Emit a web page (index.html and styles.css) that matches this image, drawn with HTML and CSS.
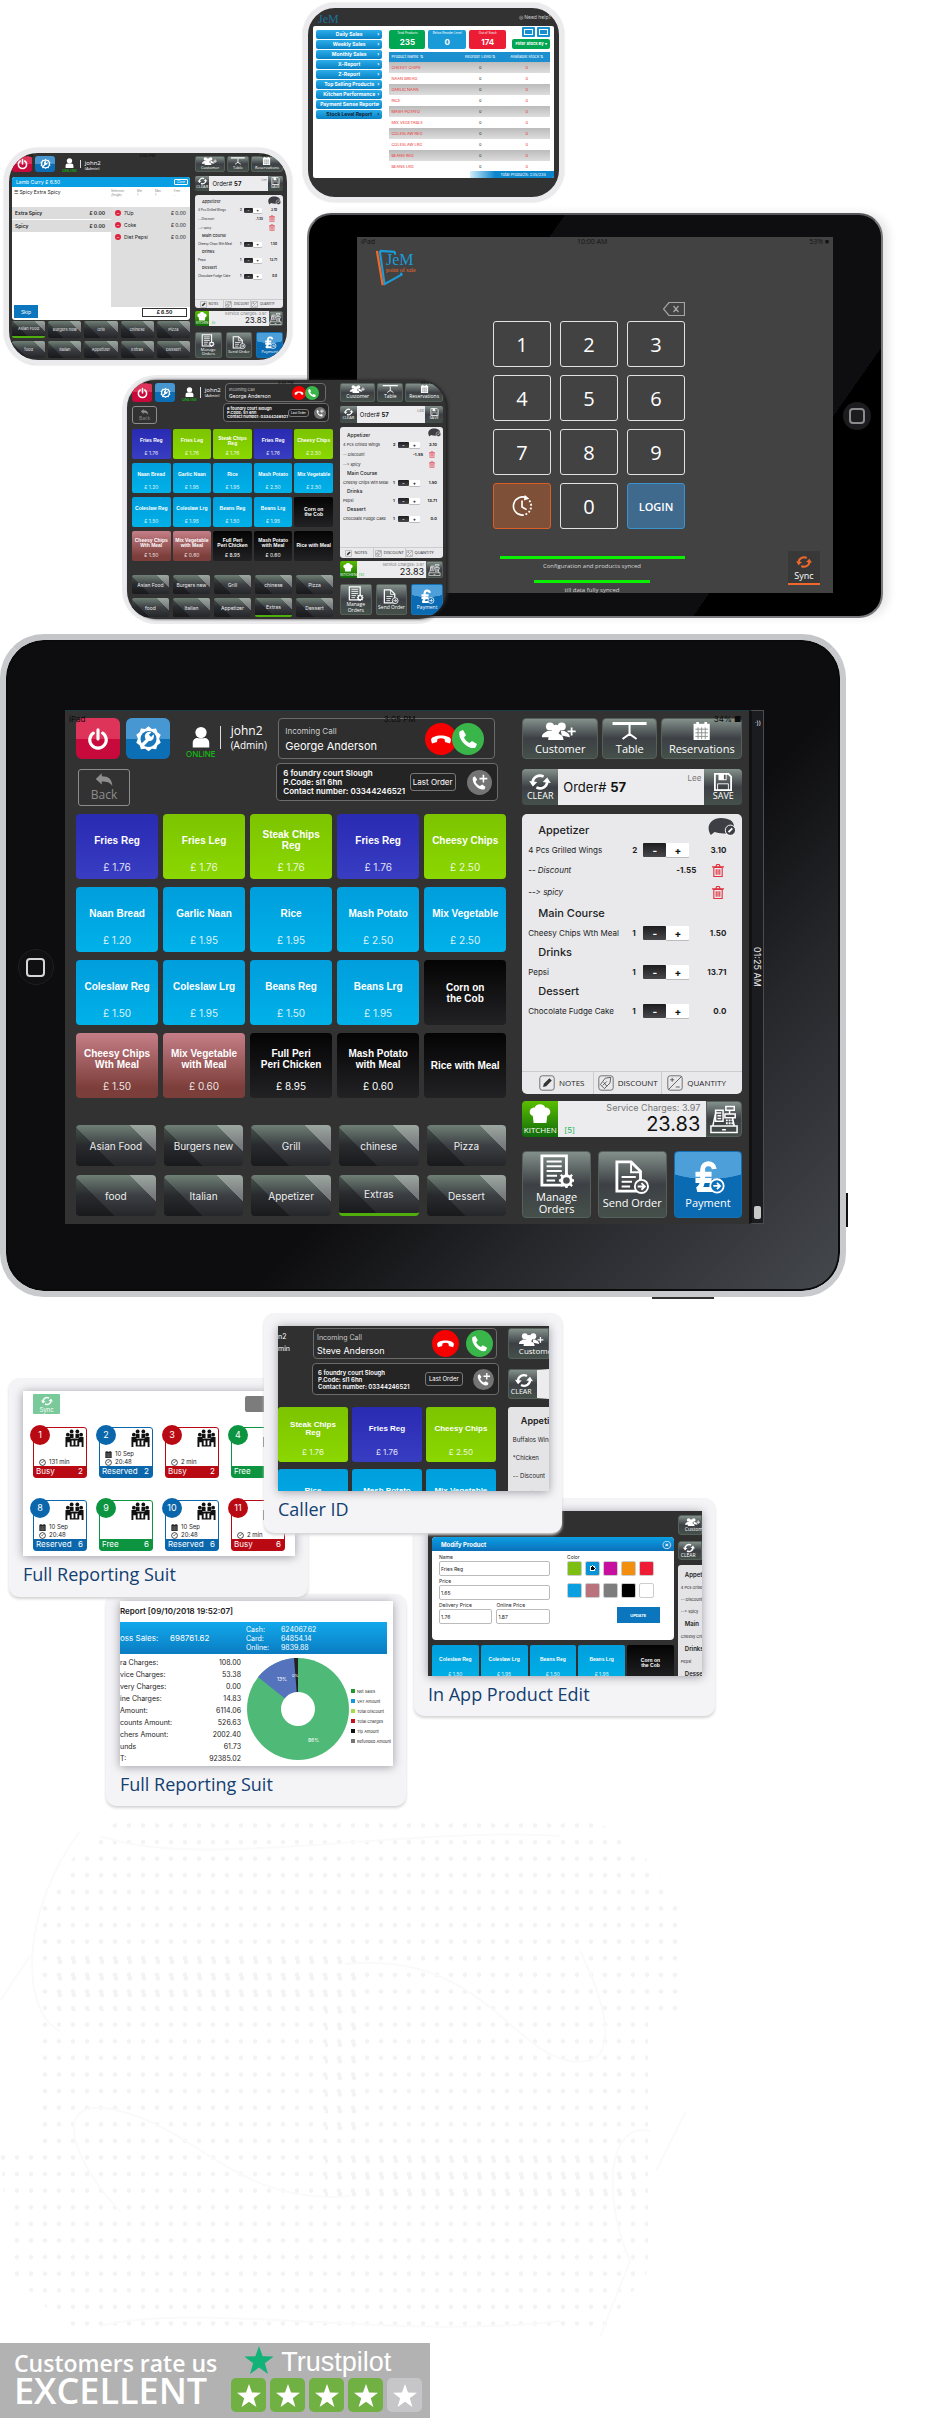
FILE: index.html
```html
<!DOCTYPE html>
<html lang="en">
<head>
<meta charset="utf-8">
<meta name="viewport" content="width=device-width, initial-scale=1">
<title>JeM Point of Sale</title>
<link rel="stylesheet" href="styles.css">
</head>
<body>
<svg class="sprite" aria-hidden="true">
  <symbol id="power" viewBox="0 0 24 24"><path d="M7 5.5a9 9 0 1 0 10 0M12 2v10" fill="none" stroke="currentColor" stroke-width="3.4" stroke-linecap="round"/></symbol>
  <symbol id="gear" viewBox="0 0 32 32"><path d="M16 1l4 3 5-.5 1.500 4.500 4 3-2 4.500 2 5-4 3-1.500 4.500-5-.5-4 3-4-3-5 .5L5.500 23.500l-4-3 2-5-2-4.500 4-3L7 3.500l5 .5z" fill="#fff"/><circle cx="16" cy="16" r="9.500" fill="#1878bb"/><path d="M10 22l7-7" stroke="#fff" stroke-width="4" stroke-linecap="round"/><path d="M22 10.500l-3 3-2.500-2.500L19.500 8a5.500 5.500 0 1 0 2.500 2.500z" fill="#fff"/></symbol>
  <symbol id="user" viewBox="0 0 24 28"><circle cx="12" cy="8" r="7.500" fill="currentColor"/><path d="M1 28v-6c0-5 4-7 7-6.500h8c3-.5 7 1.500 7 6.500v6z" fill="currentColor"/></symbol>
  <symbol id="back" viewBox="0 0 24 18"><path d="M9 0v4c9 0 14 4 14 13-3-5-7-6-14-6v4L1 7.500z" fill="currentColor"/></symbol>
  <symbol id="hangup" viewBox="0 0 32 32"><circle cx="16" cy="16" r="16" fill="#f60000"/><path d="M6 17c0-6 20-6 20 0l-1 3.500-5-1.500-.5-3c-2-1-5-1-7 0l-.5 3-5 1.500z" fill="#fff"/></symbol>
  <symbol id="answer" viewBox="0 0 32 32"><circle cx="16" cy="16" r="16" fill="#39b54a"/><path d="M11 7l3 5-2 2.500c1 2.500 3 4.500 5.500 5.500l2.500-2 5 3-1.500 3.500c-6 3-18-7-16-16z" fill="#fff"/></symbol>
  <symbol id="addcall" viewBox="0 0 32 32"><circle cx="16" cy="16" r="16" fill="#747474"/><path d="M10 8l3 4-2 3c1 2.500 3 4.500 5.500 5.500l3-2 4 3-1 3c-6 3-17-7-15-15z" fill="#fff"/><path d="M21 6v10M16 11h10" stroke="#fff" stroke-width="2"/></symbol>
  <symbol id="group" viewBox="0 0 40 20"><g fill="currentColor"><circle cx="9" cy="5" r="4.500"/><circle cx="22" cy="5" r="4.500"/><path d="M0 17c0-5 4-5 6-7h6c1 2 3 2 3 4l-3 3zM31 17c0-5-4-5-6-7h-4l1 5z"/><circle cx="15.500" cy="8" r="5"/><path d="M7 20c0-6 4-5 6-8h5c2 3 6 2 6 8z"/></g><path d="M33 6v9M28.500 10.500h9" stroke="currentColor" stroke-width="2"/></symbol>
  <symbol id="table" viewBox="0 0 34 18"><path d="M0 0h34v3H0z" fill="currentColor"/><path d="M17 3v11M10 17l7-5 7 5" fill="none" stroke="currentColor" stroke-width="2"/></symbol>
  <symbol id="calendar" viewBox="0 0 20 20"><path d="M4 0h3v2h6V0h3v2h3v18H1V2h3z" fill="currentColor"/><path d="M3 8h14M3 12h14M3 16h14M6 6v13M10 6v13M14 6v13" stroke="#868c8b" stroke-width="1"/></symbol>
  <symbol id="sync" viewBox="0 0 24 20"><path d="M4 11a8 7.500 0 0 1 12-7M20 9a8 7.500 0 0 1-12 7" fill="none" stroke="currentColor" stroke-width="3"/><path d="M0 9l4 6 5-5zM24 11l-4-6-5 5z" fill="currentColor"/></symbol>
  <symbol id="save" viewBox="0 0 20 20"><path d="M1 1h15l3 3v15H1z" fill="none" stroke="currentColor" stroke-width="2"/><path d="M5 1h9v7H5z" fill="currentColor"/><path d="M11 2h2v5h-2z" fill="#555"/><path d="M4 12h12v7H4z" fill="none" stroke="currentColor"/></symbol>
  <symbol id="trash" viewBox="0 0 20 22"><path d="M3 6h14v15H3zM0 5h20M6 5l2-4h4l2 4M7 9v9M10 9v9M13 9v9" fill="none" stroke="#e2303f" stroke-width="1.800"/></symbol>
  <symbol id="chat" viewBox="0 0 30 20"><path d="M3 19C-3 10 3 1 14 1s16 6 13 12-14 5-20 3z" fill="#3d3f45"/><circle cx="24" cy="14" r="5.500" fill="#3d3f45" stroke="#fff"/><path d="M22 16l4-4" stroke="#fff" stroke-width="2"/></symbol>
  <symbol id="chef" viewBox="0 0 24 22"><path d="M5 21l-1-8C-2 11 1 3 6 4c2-5 10-5 12 0 5-1 8 7 2 9l-1 8z" fill="currentColor"/></symbol>
  <symbol id="register" viewBox="0 0 30 30"><path d="M1 22h28v7H1zM3 22L6 8h5M26 22l-2-9M17 1h9v4h-9zM21 5v4M16 9h11v4H16zM6 5h8v12H6zM8 8h4M8 11h4M8 14h4M13 26h4" fill="none" stroke="currentColor" stroke-width="1.600"/><path d="M17 15h2v2h-2zM20 15h2v2h-2zM23 15h2v2h-2zM17 18h2v2h-2zM20 18h2v2h-2zM23 18h2v2h-2z" fill="currentColor"/></symbol>
  <symbol id="docgear" viewBox="0 0 36 36"><path d="M2 2h26v31H2z" fill="none" stroke="currentColor" stroke-width="3"/><path d="M7 8h16M7 13h16M7 18h16M7 23h11M7 28h9" stroke="currentColor" stroke-width="2"/><circle cx="28" cy="28" r="5" fill="#494d50" stroke="currentColor" stroke-width="3"/><path d="M28 20v3M28 33v3M20 28h3M33 28h3M22 22l3 3M31 31l3 3M34 22l-3 3M25 31l-3 3" stroke="currentColor" stroke-width="2.500"/></symbol>
  <symbol id="docsend" viewBox="0 0 36 36"><path d="M2 2h15l10 10v21H2z" fill="none" stroke="currentColor" stroke-width="3"/><path d="M17 2v11h10M7 18h15M7 23h11M7 28h9" fill="none" stroke="currentColor" stroke-width="2"/><circle cx="28" cy="28" r="7" fill="#494d50" stroke="currentColor" stroke-width="2"/><path d="M24 28h7M28 24.500l3.500 3.500-3.500 3.500" fill="none" stroke="currentColor" stroke-width="2"/></symbol>
  <symbol id="pound" viewBox="0 0 36 38"><path d="M25 10c-1-8-13-8-13 1v10c0 6-2 10-6 12h22M4 16h18M4 23h18" fill="none" stroke="currentColor" stroke-width="5.500"/><circle cx="28" cy="29" r="7.500" fill="#0d6fb8" stroke="currentColor" stroke-width="2"/><path d="M24 29h7M28 25.500l3.500 3.500-3.500 3.500" fill="none" stroke="currentColor" stroke-width="2"/></symbol>
  <symbol id="notes" viewBox="0 0 20 20"><rect x="1" y="1" width="18" height="18" rx="3" fill="none" stroke="#555"/><path d="M5 15l1-4 7-7 3 3-7 7z" fill="#333"/></symbol>
  <symbol id="discount" viewBox="0 0 20 20"><rect x="1" y="1" width="18" height="18" rx="3" fill="none" stroke="#555"/><path d="M3 12l6-8 7-1-1 7-7 7zM7 9l4 5M11 8l-5 5" fill="none" stroke="#444"/></symbol>
  <symbol id="quantity" viewBox="0 0 20 20"><rect x="1" y="1" width="18" height="18" rx="3" fill="none" stroke="#555"/><path d="M2 18L18 2M4 6h5M6.500 3.500v5M11 15h5" fill="none" stroke="#444"/></symbol>
  <symbol id="star" viewBox="0 0 24 23"><path d="M12 0l3 8.500 9 .2-7.200 5.500 2.600 8.800L12 17.700 4.600 23l2.600-8.800L0 8.700l9-.2z" fill="currentColor"/></symbol>
  <symbol id="people" viewBox="0 0 40 40"><g fill="#111"><circle cx="14" cy="5" r="4"/><circle cx="26" cy="5" r="4"/><circle cx="6" cy="12" r="4"/><circle cx="34" cy="12" r="4"/><path d="M10 10h8v9h-8zM22 10h8v9h-8zM1 17h9l4 6v14h-4v-9H5v10H1zM39 17h-9l-4 6v14h4v-9h5v10h4zM13 20h14v4h-5v10h4v3H14v-3h4V24h-5z"/></g></symbol>
  <symbol id="clock" viewBox="0 0 12 12"><circle cx="6" cy="6" r="5" fill="none" stroke="#222" stroke-width="1.400"/><path d="M6 6l2-3M6 6H4" stroke="#222"/></symbol>
  <symbol id="jem" viewBox="0 0 40 40"><path d="M4 2l16 1M20 3v3M4 2l5 35 18-10-1-2" fill="none" stroke="#1b9cd8" stroke-width="2.200"/><path d="M1 2l6 36" stroke="#ee6a2c" stroke-width="2.400"/></symbol>
</svg>

<main>
  <section class="collage" aria-label="Till screens">
    <article class="slate stock" id="stock"></article>
    <article class="slate pos pos-sm" id="pos-small"></article>
    <div class="shell"></div>
    <article class="pad">
      <div class="login">
        <div class="login-status"><span>iPad</span><span>10:00 AM</span><span>53% ■</span></div>
        <div class="brand"><svg><use href="#jem"/></svg><p><b>JeM</b><small>point of sale</small></p></div>
        <div class="keypad-wrap">
          <button class="erase" aria-label="Delete"><svg viewBox="0 0 22 14"><path d="M6 .5h15.500v13H6L.5 7zM10.500 4l5 6M15.500 4l-5 6" fill="none" stroke="#a5a5a5" stroke-width="1.200"/></svg></button>
          <div class="keypad">
            <button>1</button><button>2</button><button>3</button>
            <button>4</button><button>5</button><button>6</button>
            <button>7</button><button>8</button><button>9</button>
            <button class="key-clock" aria-label="Clock in"><svg viewBox="0 0 24 24"><path d="M12 22A10 10 0 1 1 17 3M12 6v7l5 3" fill="none" stroke="#fff" stroke-width="1.800"/><path d="M15 0l5 4-6 2z" fill="#fff"/><path d="M20 6a10 10 0 0 1-8 16" fill="none" stroke="#fff" stroke-width="2" stroke-dasharray="2 2"/></svg></button><button>0</button><button class="key-login">LOGIN</button>
          </div>
        </div>
        <div class="synced"><i></i><span>Configuration and products synced</span><i class="short"></i><span>till data fully synced</span></div>
        <button class="sync"><svg><use href="#sync"/></svg>Sync</button>
      </div>
      <span class="home"></span>
    </article>
    <article class="slate pos pos-md" id="pos-medium"></article>
  </section>

  <section class="tablet" aria-label="Order screen">
    <span class="home"></span>
    <div class="pos pos-lg" id="pos-large"></div>
    <aside class="strip"><span>·))</span><span>01:25 AM</span><i></i></aside>
    <span class="side-key"></span><span class="bottom-key"></span>
  </section>

  <section class="gallery" aria-label="Features">
    <figure class="shot tables"><div class="frame" id="tables"></div><figcaption>Full Reporting Suit</figcaption></figure>
    <figure class="shot report"><div class="frame" id="report"></div><figcaption>Full Reporting Suit</figcaption></figure>
    <figure class="shot edit"><div class="frame" id="edit"></div><figcaption>In App Product Edit</figcaption></figure>
    <figure class="shot caller"><div class="frame" id="caller"></div><figcaption>Caller ID</figcaption></figure>
  </section>

  <svg class="dots" viewBox="0 0 925 522" aria-hidden="true">
    <defs>
      <pattern id="dot" width="14" height="16.600" patternUnits="userSpaceOnUse"><circle cx="3" cy="4.500" r="2.300" fill="#f3f3f5"/></pattern>
      <pattern id="dot2" width="14" height="16.600" patternUnits="userSpaceOnUse"><circle cx="4" cy="8" r="2.300" fill="#f3f3f5"/></pattern>
    </defs>
    <path d="M110 2H600L640 30 686 90V190H355V325H40V90L70 40z" fill="url(#dot)"/>
    <path d="M355 195H648V325H355z" fill="url(#dot)"/>
    <path d="M55 131H365V190H55zM325 190H365V322H325zM325 330H640V386H325z" fill="url(#dot2)"/>
    <path d="M0 325H648V450L600 515H75L10 450z" fill="url(#dot)"/>
    <g fill="none" stroke="#fafafb" stroke-width="2"><path d="M345 143C480 130 510 230 570 240s30-70 10-110M350 375C240 385 200 310 120 290s-40 60 0 100M80 10C20 90 20 190 60 210M650 310c-40-10-50 60-20 130l-30 76M100 15C200 50 400 5 560 15M100 505C200 480 400 520 560 500M0 180l30-45M686 290l-30 60"/></g>
  </svg>
</main>

<footer class="trust">
  <p class="rate"><span>Customers rate us</span><strong>EXCELLENT</strong></p>
  <div class="pilot">
    <p class="pilot-name"><svg><use href="#star"/></svg>Trustpilot</p>
    <p class="stars" role="img" aria-label="4 out of 5 stars"><i><svg><use href="#star"/></svg></i><i><svg><use href="#star"/></svg></i><i><svg><use href="#star"/></svg></i><i><svg><use href="#star"/></svg></i><i class="off"><svg><use href="#star"/></svg></i></p>
  </div>
</footer>
<script src="app.js"></script>
</body>
</html>
```

FILE: styles.css
```css
* { box-sizing: border-box; }
body { margin: 0; background: #fff; font-family: Inter, "Liberation Sans", sans-serif; color: #222; }
p, ul, figure, h3, h4 { margin: 0; padding: 0; font-weight: inherit; font-size: inherit; }
ul { list-style: none; }
button, input { font: inherit; color: inherit; border: 0; padding: 0; margin: 0; background: none; min-width: 0; }
svg { display: block; flex: none; }
table { border-collapse: collapse; width: 100%; }
td, th { padding: 0; font-weight: 400; text-align: left; }
.sprite { position: absolute; width: 0; height: 0; }

/* collage of tills */
.collage {
  display: grid;
  grid-template-columns: 4fr 118fr 170fr 11fr 4fr 143fr 114fr 319fr 42fr;
  grid-template-rows: 3px 145px 54px 11px 152px 10px 243px 6px 10px;
}
.collage > * { min-width: 0; min-height: 0; }
.slate { background: #323232; border: 5px solid #ebebed; border-radius: 34px; overflow: hidden; box-shadow: 0 0 2px #ccc; position: relative; }
.stock { grid-area: 2 / 5 / 4 / 8; }
.collage .pos-sm { grid-area: 3 / 2 / 6 / 4; }
.pad { grid-area: 5 / 6 / 8 / 9; }
.shell { grid-area: 7 / 3 / 9 / 7; background: #ebebed; border-radius: 34px; }
.collage .pos-md { grid-area: 7 / 3 / 9 / 7; margin: 5px 4px 5px 5px; border: 0; border-radius: 28px; box-shadow: 2px 0 3px #222; }

.pad { display: flex; align-items: center; background: linear-gradient(125deg, #000 30%, #0e0e10 30%, #0e0e10 78%, #000 78%); border: 2px solid #77797c; border-top-color: #55575a; border-radius: 24px; padding: 6px 10px 6px 48px; gap: 10px; box-shadow: 6px 0 8px #e8e8e8; }
.home { width: 28px; height: 28px; border-radius: 50%; background: #1c1c1e; display: grid; place-items: center; flex: none; }
.home::before { content: ""; width: 12px; height: 12px; border: 2px solid #8b8b8d; border-radius: 4px; }
.login { flex: 1; height: 356px; margin-bottom: 1px; background: #424242; position: relative; color: #fff; display: flex; flex-direction: column; align-items: center; font-family: "Open Sans", "Noto Sans", sans-serif; }
.login-status { align-self: stretch; display: flex; justify-content: space-between; padding: 1px 4px; color: #151515; font-size: 7px; line-height: 8px; }
.brand { align-self: flex-start; display: flex; margin: 1px 0 0 19px; height: 40px; }
.brand svg { width: 38px; height: 40px; }
.brand p { margin-left: -28px; padding-top: 4px; line-height: 10px; color: #1b9cd8; font-family: "Liberation Serif", serif; }
.brand b { display: block; font-size: 16px; font-weight: 400; line-height: 15px; }
.brand small { display: block; color: #ee6a2c; font-size: 6px; line-height: 6px; }
.keypad-wrap { width: 192px; margin: 14px 12px 0 0; display: flex; flex-direction: column; align-items: flex-end; }
.erase svg { width: 22px; height: 14px; }
.keypad { display: grid; grid-template-columns: repeat(3, 1fr); grid-auto-rows: 46px; gap: 8px 9px; margin-top: 5px; width: 100%; }
.keypad button { border: 1px solid #e2e2e2; border-radius: 3px; font-size: 20px; display: grid; place-items: center; }
.keypad svg { width: 22px; height: 24px; }
.keypad .key-clock { background: #7f5038; border-color: #dd5d27; }
.keypad .key-login { background: #3f6a8e; border-color: #3c92cc; font-size: 11px; font-weight: 600; }
.synced { width: 185px; margin-right: 6px; margin-top: 27px; display: flex; flex-direction: column; align-items: center; font-size: 6px; line-height: 8px; color: #d8d8d8; }
.synced i { width: 100%; height: 3px; background: #0af000; margin-bottom: 3px; }
.synced i.short { width: 116px; margin-top: 10px; }
.sync { position: absolute; right: 13px; bottom: 8px; width: 32px; padding-top: 4px; background: #383838; border-bottom: 2px solid #f0672a; font-size: 9px; line-height: 14px; display: grid; justify-items: center; }
.sync svg { width: 16px; height: 14px; color: #f0672a; }

/* stock report */
.stock { padding: 18px 5px 0; border-radius: 32px; }
.stock-logo { position: absolute; left: 10px; top: 5px; color: #1b6f99; font: 12px/12px "Liberation Serif", serif; }
.help { position: absolute; right: 8px; top: 5px; color: #ccc; font-size: 5px; line-height: 9px; }
.stock-body { background: #fff; height: 152px; display: grid; grid-template-columns: 67fr 162fr; column-gap: 7px; padding: 4px 4px 0 3px; overflow: hidden; position: relative; border-radius: 2px; }
.stock-nav { display: grid; grid-auto-rows: 9px; row-gap: 1px; }
.stock-nav button { background: linear-gradient(#2cadea, #0982c4); border-radius: 2px; color: #fff; font-size: 5px; font-weight: 700; line-height: 9px; display: flex; justify-content: center; position: relative; }
.stock-nav button::after { content: "›"; position: absolute; right: 3px; }
.stock-nav button:last-child { color: #123; }
.stats { display: grid; grid-template-columns: 37fr 39fr 38fr 42fr; gap: 3px; height: 19px; }
.stats div { color: #fff; text-align: center; font-size: 3px; line-height: 7px; border-radius: 2px; background: #00a651; }
.stats div:nth-child(2) { background: #1b9ad8; }
.stats div:nth-child(3) { background: #ec1c34; }
.stats b { display: block; font-size: 8px; line-height: 10px; }
.stats div.filter { background: none; display: grid; grid-template-columns: 13px 13px; justify-content: end; gap: 2px; margin-top: -3px; }
.stats .filter i { height: 10px; background: #1590d0; border-radius: 1px; border: 2px solid #1590d0; box-shadow: inset 0 0 0 1px #fff; }
.stats .filter button { grid-column: 1 / 3; justify-self: end; width: 38px; background: #00a651; font-size: 4px; font-weight: 700; border-radius: 2px; height: 10px; line-height: 10px; }
.stock-table { margin-top: 3px; font-size: 4px; line-height: 11px; }
.stock-table th { background: #1b8fd0; color: #fff; height: 10px; line-height: 10px; padding-left: 2px; }
.stock-table th:first-child { width: 42%; }
.stock-table td { height: 11px; color: #e33; padding-left: 2px; }
.stock-table tr > :nth-child(n+2) { text-align: center; }
.stock-table tbody tr:nth-child(odd) td { background: linear-gradient(#bbb, #ddd); }
.stock-table td:nth-child(2) { color: #333; }
.stock-foot { position: absolute; right: 0; bottom: 0; width: 84px; height: 7px; background: linear-gradient(90deg, #d0ecfa, #0c86cc 30%); color: #fff; font-size: 4px; line-height: 7px; text-align: right; padding-right: 8px; }

/* till screen: sizes per variant */
.pos {
  --pad: 7px 7px 6px 11px; --cols: 430fr 220fr; --gap: 16px;
  --bar: 41px; --field: 36px; --foot: 67px;
  --tile: 65px; --tgx: 5px; --tgy: 8px; --cat: 41px; --cgx: 8px; --cgy: 9px; --catgap: 27px;
  --head: 20px; --item: 19px; --mod: 22px; --step: 14px; --radius: 4px;
  --f8: 8px; --f9: 9px; --f10: 10px; --f11: 11px; --f20: 20px;
  position: relative; background: #323232; padding: var(--pad);
  display: grid; grid-template-columns: var(--cols); column-gap: var(--gap); color: #fff; font-size: var(--f10);
  font-feature-settings: "calt" 0;
}
.pos-md {
  --pad: 3px 3px 3px 5px; --cols: 201fr 103fr; --gap: 7px;
  --bar: 19px; --field: 17px; --foot: 31px;
  --tile: 30px; --tgx: 2px; --tgy: 4px; --cat: 19px; --cgx: 4px; --cgy: 4px; --catgap: 14px;
  --head: 9px; --item: 9px; --mod: 10px; --step: 6px; --radius: 2px;
  --f8: 4px; --f9: 4px; --f10: 5px; --f11: 5px; --f20: 9px;
}
.pos-sm {
  --pad: 3px 4px 3px 3px; --cols: 178fr 88fr; --gap: 5px;
  --bar: 16px; --field: 15px; --foot: 26px;
  --cat: 17px; --cgx: 3px; --cgy: 3px; --catgap: 1px;
  --head: 8px; --item: 8px; --mod: 9px; --step: 5px; --radius: 2px;
  --f8: 3px; --f9: 4px; --f10: 4px; --f11: 4px; --f20: 8px;
}
.pos > * { min-width: 0; }
.till-status { position: absolute; inset: 4px 4px auto 4px; display: flex; justify-content: space-between; color: #0b0b0b; font-size: 8px; line-height: 8px; padding-right: 4px; z-index: 2; }
.pos-md .till-status, .pos-sm .till-status { inset: 1px 8px auto 16px; font-size: 4px; line-height: 4px; }
.left { display: flex; flex-direction: column; }
.top { display: grid; grid-template-columns: 200fr 221fr; padding-right: 2%; row-gap: 4px; }
.who { display: flex; height: var(--bar); gap: 6px; }
.icon-btn { width: 44px; border-radius: 6px; display: grid; place-items: center; background: linear-gradient(#de3459 50%, #c8093b 50%); }
.icon-btn.blue { background: linear-gradient(#4697d2 50%, #0c6eb5 50%); }
.icon-btn svg { width: 22px; height: 24px; }
.icon-btn.blue svg { width: 27px; height: 28px; }
.online { margin-left: 10px; padding-top: 8px; display: grid; justify-items: center; color: #0bd00b; font-size: 8px; line-height: 10px; }
.online svg { width: 18px; height: 22px; color: #fff; }
.name { border-left: 1px solid #ddd; margin: 8px 0 10px -2px; padding-left: 10px; font: 12px/10px "Open Sans", sans-serif; }
.name small { display: block; font-size: 10px; line-height: 18px; }
.back { width: 52px; height: 37px; border: 1px solid #8d8d8d; border-radius: 3px; color: #8d8d8d; margin: 10px 0 0 2px; font: 12px/15px "Open Sans", sans-serif; display: grid; justify-items: center; align-content: center; }
.back svg { width: 18px; height: 14px; }
.calls { display: grid; row-gap: 4px; align-content: start; }
.call { height: 41px; border: 1px solid #6b6b6b; border-radius: 4px; display: flex; align-items: center; padding: 0 10px 0 6px; margin: 0 3px 0 2px; background: #2e2e2e; }
.call p { flex: 1; font-size: 11px; line-height: 15px; white-space: nowrap; }
.call small { display: block; font-size: 8px; color: #ccc; }
.call svg { width: 32px; height: 32px; }
.call svg + svg { margin-left: -5px; }
.address { height: 38px; border: 1px solid #6b6b6b; border-radius: 4px; display: flex; align-items: center; padding: 0 5px 0 6px; background: #242424; }
.address p { flex: 1; font-size: 8px; line-height: 9px; font-weight: 600; white-space: nowrap; }
.address button { border: 1px solid #777; border-radius: 3px; height: 18px; width: 46px; font-size: 8px; margin-right: 11px; white-space: nowrap; }
.address svg { width: 25px; height: 25px; }

.tiles { display: grid; grid-template-columns: repeat(5, 1fr); gap: var(--tgy) var(--tgx); grid-auto-rows: var(--tile); margin-top: 8px; }
.tile { border-radius: var(--radius); color: #fff; display: grid; grid-template-rows: 1fr 34%; place-items: center; background: linear-gradient(#009edc, #00b1e8); font-size: var(--f10); line-height: 1.1; text-align: center; overflow: hidden; }
.tile b { padding-top: 12%; font-family: "Liberation Sans", sans-serif; white-space: pre-line; }
.tile.solo { grid-template-rows: 1fr; }
.tile.solo b { padding: 0; }
.tile span { opacity: .85; }
.tile.navy { background: linear-gradient(#292bb3, #383dc2); }
.tile.lime { background: linear-gradient(#7cc400, #8bd700); }
.tile.rose { background: linear-gradient(#c57e87, #7c3e3a 85%); }
.tile.dark { background: linear-gradient(#040405, #222224); }
.tile.dark span { opacity: 1; }
.cats { display: grid; grid-template-columns: repeat(5, 1fr); gap: var(--cgy) var(--cgx); grid-auto-rows: var(--cat); margin-top: var(--catgap); }
.cat { border-radius: var(--radius); font-size: var(--f10); color: #eee; background:
  linear-gradient(45deg, #0005 32%, transparent 32%),
  linear-gradient(45deg, transparent 78%, #ffffff50 78%),
  linear-gradient(#6f8075, #3c3f43 50%, #25262a); }
.cat.on { border-bottom: 3px solid #4fae0c; }

.right { display: flex; flex-direction: column; font-family: Inter, sans-serif; }
.steel { border: 1px solid #55605a; border-radius: var(--radius); background: linear-gradient(#83908a, #3d4045 50%, #45504a); display: flex; flex-direction: column; align-items: center; justify-content: center; font-family: "Open Sans", sans-serif; font-size: var(--f11); font-weight: 500; line-height: 1.1; text-align: center; white-space: nowrap; }
.trio { display: grid; grid-template-columns: 76fr 55fr 81fr; gap: 4px; height: var(--bar); }
.trio svg { width: 70%; height: 18px; }
.trio .steel { gap: 3px; }
.order { display: grid; grid-template-columns: 36fr 146fr 38fr; height: var(--field); margin-top: 10px; }
.order .steel { font-size: var(--f9); border: 0; }
.order .steel svg { width: 24px; height: 18px; }
.order .steel:first-child, .total .kitchen { border-radius: var(--radius) 0 0 var(--radius); }
.order .steel:last-child, .total .steel { border-radius: 0 var(--radius) var(--radius) 0; }
.number { background: #ececee; color: #111; display: flex; justify-content: space-between; align-items: center; padding: 0 3px 0 5px; font-size: 13px; white-space: nowrap; }
.number small { font-size: var(--f8); color: #777; align-self: flex-start; margin-top: 4px; }
.list { height: 280px; background: #e9e9ec; color: #222; border-radius: 5px; margin-top: 9px; padding-top: 6px; display: flex; flex-direction: column; position: relative; }
.list > svg { position: absolute; right: 6px; top: 3px; width: 28px; height: 19px; }
.list h4 { height: var(--head); line-height: var(--head); font-size: var(--f11); font-weight: 500; padding-left: 16px; }
.row { display: grid; grid-template-columns: 1fr 17px 46px 37px; align-items: center; height: var(--item); padding: 0 16px 0 6px; font-size: var(--f8); white-space: nowrap; }
.row b { text-align: right; }
.row b:first-of-type { text-align: left; padding-left: 6px; }
.row > span { min-width: 0; }
.stepper { display: grid; grid-template-columns: 1fr 1fr; height: var(--step); }
.stepper button { background: linear-gradient(#1d1d1f, #48484c); color: #fff; font-weight: 700; font-size: var(--f10); line-height: var(--step); border-radius: 1px; }
.stepper button + button { background: #fff; color: #111; box-shadow: 0 1px #bbb; }
.row.mod { grid-template-columns: 1fr 40px 30px; height: var(--mod); font-style: italic; }
.row.mod b { font-style: normal; padding: 0; text-align: right; }
.row.mod button { justify-self: end; }
.row.mod svg { width: 12px; height: 15px; margin-right: 2px; }
.tools { margin-top: auto; border-top: 1px solid #ccc; height: 23px; display: grid; grid-template-columns: 72fr 68fr 80fr; font: var(--f8)/1 "Open Sans", sans-serif; }
.tools button { display: flex; align-items: center; justify-content: center; gap: 4px; border-right: 1px solid #ccc; }
.tools button:first-child { padding-left: 8px; }
.tools button:last-child { border: 0; justify-content: flex-start; padding-left: 5px; }
.tools svg { width: 16px; height: 16px; }
.total { display: grid; grid-template-columns: 36fr 148fr 36fr; height: var(--field); margin-top: 7px; }
.kitchen { background: linear-gradient(#5bbd00, #0f6b0b); font: 500 var(--f8)/1 "Open Sans", sans-serif; display: grid; justify-items: center; align-content: center; gap: 2px; }
.kitchen svg { width: 24px; height: 20px; }
.sum { background: #ececee; color: #111; display: flex; align-items: flex-end; justify-content: space-between; padding: 0 6px 2px; white-space: nowrap; }
.sum em { color: #27b457; font-style: normal; font-size: var(--f8); }
.sum p { text-align: right; font-size: var(--f20); line-height: 1.1; }
.sum small { display: block; font-size: var(--f9); line-height: 1.1; color: #777; }
.total .steel svg { width: 28px; height: 29px; }
.actions { display: grid; grid-template-columns: repeat(3, 1fr); gap: 7px; height: var(--foot); margin-top: 14px; }
.actions svg { width: 36px; height: 34px; margin-bottom: 3px; }
.actions .pay { background: radial-gradient(ellipse 90% 42% at 50% 0, #4c9fd9 98%, #0a6ab2); border-color: #1571b2; }

.pos-md .top, .pos-md .calls { row-gap: 1px; }
.pos-md .who, .pos-sm .who { gap: 3px; }
.pos-md .icon-btn, .pos-sm .icon-btn { width: 20px; border-radius: 3px; }
.pos-md .icon-btn svg, .pos-sm .icon-btn svg { width: 11px; height: 12px; }
.pos-md .online, .pos-sm .online { margin-left: 4px; padding-top: 4px; font-size: 4px; line-height: 5px; }
.pos-md .online svg, .pos-sm .online svg { width: 9px; height: 10px; }
.pos-sm .online { padding-top: 2px; }
.pos-md .name, .pos-sm .name { margin: 4px 0; padding-left: 4px; font-size: 6px; line-height: 6px; }
.pos-md .name small, .pos-sm .name small { font-size: 4px; line-height: 6px; }
.pos-md .back { width: 25px; height: 18px; font-size: 5px; line-height: 6px; margin: 4px 0 0; }
.pos-md .back svg { width: 9px; height: 6px; }
.pos-md .call { height: 19px; padding: 0 6px 0 3px; }
.pos-md .call p { font-size: 5px; line-height: 7px; }
.pos-md .call small { font-size: 4px; }
.pos-md .call svg { width: 14px; height: 14px; }
.pos-md .call svg + svg { margin-left: -1px; }
.pos-md .address { height: 19px; padding: 0 2px 0 3px; }
.pos-md .address p { font-size: 4px; line-height: 4px; }
.pos-md .address button { width: 21px; height: 8px; font-size: 3px; line-height: 6px; margin-right: 5px; }
.pos-md .address svg { width: 12px; height: 12px; }
.pos-md .tiles { margin-top: 5px; }
.pos-md .cat.on, .pos-sm .cat.on { border-bottom-width: 2px; }
.pos-md .trio, .pos-sm .trio { gap: 2px; }
.pos-md .trio .steel, .pos-sm .trio .steel { gap: 1px; }
.pos-md .trio svg, .pos-sm .trio svg { height: 8px; }
.pos-md .order, .pos-sm .order { margin-top: 4px; }
.pos-md .order .steel svg, .pos-sm .order .steel svg { width: 11px; height: 8px; }
.pos-md .number, .pos-sm .number { font-size: 6px; padding: 0 1px 0 3px; }
.pos-md .number small, .pos-sm .number small { margin-top: 2px; }
.pos-md .list, .pos-sm .list { height: 131px; border-radius: 3px; margin-top: 4px; padding-top: 4px; }
.pos-sm .list { height: 113px; padding-top: 3px; }
.pos-md .list > svg, .pos-sm .list > svg { width: 13px; height: 9px; top: 1px; right: 2px; }
.pos-md .list h4, .pos-sm .list h4 { padding-left: 7px; }
.pos-md .row, .pos-sm .row { grid-template-columns: 1fr 8px 22px 17px; padding: 0 6px 0 3px; }
.pos-md .row b:first-of-type, .pos-sm .row b:first-of-type { padding-left: 3px; }
.pos-sm .row { grid-template-columns: 1fr 7px 18px 15px; }
.pos-md .row.mod, .pos-sm .row.mod { grid-template-columns: 1fr 20px 14px; }
.pos-md .row.mod b:first-of-type, .pos-sm .row.mod b:first-of-type { text-align: right; }
.pos-md .row.mod svg, .pos-sm .row.mod svg { width: 6px; height: 7px; }
.pos-md .tools, .pos-sm .tools { height: 11px; }
.pos-md .tools button, .pos-sm .tools button { gap: 2px; padding-left: 0; }
.pos-md .tools svg, .pos-sm .tools svg { width: 7px; height: 7px; }
.pos-sm .tools { height: 9px; }
.pos-md .total, .pos-sm .total { margin-top: 3px; }
.pos-md .kitchen, .pos-sm .kitchen { gap: 1px; }
.pos-md .kitchen svg, .pos-sm .kitchen svg { width: 12px; height: 9px; }
.pos-md .sum, .pos-sm .sum { padding: 0 2px 1px; }
.pos-md .total .steel svg, .pos-sm .total .steel svg { width: 13px; height: 12px; }
.pos-md .actions, .pos-sm .actions { gap: 4px; margin-top: 6px; }
.pos-md .actions svg, .pos-sm .actions svg { width: 16px; height: 15px; margin-bottom: 1px; }
.pos-sm .actions svg { height: 13px; }

/* option dialog on the small till */
.options { height: 143px; margin-top: 5px; background: #fff; color: #222; border-radius: 3px; overflow: hidden; display: grid; grid-template-columns: 99fr 79fr; grid-template-rows: 10px 20px 100px 13px; font-size: 5px; line-height: 6px; }
.options header { grid-column: 1 / 3; background: #0a9fe2; color: #fff; display: flex; justify-content: space-between; align-items: center; padding: 0 2px 0 4px; }
.options header button { border: 1px solid #fff; border-radius: 1px; font-size: 3px; width: 14px; line-height: 4px; }
.options .crumb { padding: 2px; }
.options .heads { display: flex; justify-content: space-between; font-size: 3px; line-height: 4px; color: #888; padding: 2px 10px 0 0; }
.options li { display: flex; justify-content: space-between; align-items: center; height: 12px; padding: 0 4px; }
.options .picks li { background: #dcdcdc; margin-bottom: 1px; padding: 0 6px 0 3px; font-weight: 600; }
.options .extras { background: #dedede; }
.options .extras li::before { content: "–"; background: #e2203c; color: #fff; width: 6px; height: 6px; line-height: 6px; border-radius: 50%; text-align: center; margin-right: 3px; }
.options .extras span { flex: 1; }
.options .skip { background: #0b76bd; color: #fff; width: 24px; height: 13px; margin: -2px 0 0 2px; }
.options .price { border: 1px solid #333; width: 45px; height: 9px; margin: 1px 3px 0 auto; text-align: center; font-weight: 700; line-height: 7px; }

/* large tablet */
.tablet { width: 91.5%; position: relative; margin-bottom: 4px; display: grid; grid-template-columns: 59fr 684fr 15fr 76fr; padding: 70px 0 67px; border: 6px solid #c9cacd; border-top-color: #c4c5c8; border-radius: 44px; background: linear-gradient(135deg, #0d0d0f 60%, #26272b 76%, #45484d); box-shadow: inset 0 0 0 2px #0a0a0b; background-clip: padding-box; }
.tablet > .home { width: 36px; height: 36px; align-self: center; justify-self: center; background: #101012; border: 1px solid #1f1f22; }
.tablet > .home::before { width: 15px; height: 15px; border-color: #d6d6d6; }
.tablet .pos { border-top: 1px solid #1d3c46; }
.strip { background: #1b1c1f; border: 1px solid #4a4c50; border-left: 3px solid #111; color: #eee; font-size: 9px; display: flex; flex-direction: column; align-items: center; justify-content: space-between; padding: 6px 0 4px; }
.strip span { writing-mode: vertical-rl; line-height: 11px; }
.strip span:first-child { writing-mode: horizontal-tb; font-size: 6px; }
.strip i { width: 7px; height: 13px; background: #c8c8c8; border-radius: 2px; }
.side-key { position: absolute; right: -8px; bottom: 64px; width: 2px; height: 34px; background: #111; }
.bottom-key { position: absolute; right: 126px; bottom: -8px; width: 62px; height: 2px; background: #333; }

/* feature cards */
.gallery { display: grid; grid-template-columns: 9fr 97fr 158fr 44fr 98fr 8fr 148fr 153fr 210fr; grid-template-rows: 12px 65px 120px 35px 61px 3px 119px 90px 15px; }
.shot { background: #f4f4f7; border-radius: 10px; padding: 13px 13px 0 14px; min-width: 0; box-shadow: 0 2px 3px #d4d4d6; z-index: 1; }
.shot.tables { grid-area: 3 / 2 / 7 / 5; z-index: 2; }
.shot.report { grid-area: 6 / 3 / 9 / 6; padding-top: 7px; }
.shot.edit { grid-area: 4 / 7 / 8 / 9; }
.shot.caller { grid-area: 2 / 4 / 5 / 8; z-index: 3; }
.frame { height: 165px; overflow: hidden; background: #fff; box-shadow: 0 1px 9px #9a9aa2; }
.shot figcaption { font: 500 18px/36px "Open Sans", "Noto Sans", sans-serif; color: #12406f; }

.tables .frame { padding: 3px 0 0 10px; }
.tables-bar { display: flex; justify-content: space-between; align-items: center; height: 20px; }
.tables-bar button { background: #79c99a; color: #fff; width: 27px; height: 20px; font-size: 6px; line-height: 7px; display: grid; justify-items: center; align-content: center; border-radius: 1px; }
.tables-bar svg { width: 12px; height: 10px; }
.tables-bar i { width: 50px; height: 16px; background: #7c7c7c; border-radius: 2px; }
.seats { display: grid; grid-template-columns: repeat(4, 54px); column-gap: 12px; row-gap: 22px; margin-top: 13px; }
.seat { --c: #b90a14; position: relative; height: 51px; border: 1px solid var(--c); border-radius: 3px; display: flex; flex-direction: column; justify-content: flex-end; font-size: 6px; line-height: 8px; }
.seat.reserved { --c: #0b67ac; }
.seat.free { --c: #0d9440; }
.seat > b { position: absolute; left: -4px; top: -3px; width: 20px; height: 20px; border-radius: 50%; background: var(--c); color: #fff; font-weight: 400; font-size: 9px; line-height: 20px; text-align: center; }
.seat > svg { position: absolute; right: 1px; top: 1px; width: 21px; height: 19px; }
.seat p { display: flex; gap: 3px; align-items: center; padding-left: 5px; }
.seat p svg { width: 7px; height: 7px; }
.seat footer { background: var(--c); color: #fff; display: flex; justify-content: space-between; padding: 0 3px 0 2px; height: 11px; font-size: 8px; line-height: 11px; }

.report h3 { font-size: 8px; font-weight: 600; line-height: 21px; height: 21px; }
.gross { background: linear-gradient(#12a9ec, #0a7cc2); color: #fff; height: 32px; margin-right: 6px; display: grid; grid-template-columns: 50px 76px 35px 1fr; align-items: center; font-size: 8px; }
.gross small { font-size: 7px; line-height: 9px; white-space: pre-line; }
.split { display: grid; grid-template-columns: 121px 112px 1fr; padding-top: 3px; }
.split td { font-size: 7px; height: 12px; line-height: 12px; white-space: nowrap; }
.split td:last-child { text-align: right; }
.split > svg { width: 104px; height: 104px; margin-left: 5px; }
.legend { font-size: 4px; line-height: 5px; padding-top: 32px; margin-left: -2px; }
.legend li { display: flex; gap: 2px; margin-bottom: 5px; }
.legend i { width: 4px; height: 4px; flex: none; background: var(--c); }

.edit .frame, .caller .frame { background: #303030; color: #fff; display: grid; font-feature-settings: "calt" 0; }
.edit .frame { grid-template-columns: 240fr 24fr; column-gap: 4px; padding-left: 4px; }
.modify { background: #fff; color: #222; border-radius: 4px; margin-top: 26px; height: 103px; overflow: hidden; font-size: 5px; line-height: 7px; }
.modify header { display: flex; justify-content: space-between; align-items: center; background: linear-gradient(#0a9fe4, #0b70ba); color: #fff; height: 14px; padding: 0 3px 0 9px; font-size: 6px; font-weight: 700; }
.modify form { display: grid; grid-template-columns: 110fr 92fr; column-gap: 17px; padding: 3px 14px 0 7px; }
.modify label { display: block; }
.modify input[type=text] { width: 100%; height: 15px; border: 1px solid #bbb; border-radius: 2px; padding: 0 1px; display: block; margin-bottom: 2px; }
.pair { display: grid; grid-template-columns: 1fr 1fr; gap: 4px; }
.swatches { display: grid; grid-template-columns: repeat(5, 15px); gap: 7px 3px; margin-bottom: 9px; }
.swatches input { appearance: none; height: 15px; border-radius: 2px; border: 1px solid #ccc; background: var(--c); }
.swatches input:checked { background: radial-gradient(circle, #000 2px, #fff 2px 3px, var(--c) 3px); }
.modify form button { display: block; width: 43px; height: 16px; margin-left: auto; background: #0b76bd; color: #fff; font-weight: 700; font-size: 4px; }
.peek { display: grid; grid-template-columns: repeat(5, 1fr); gap: 2px; margin-top: 5px; }
.peek .tile { height: 36px; font-size: 5px; border-radius: 2px; }
.sidebar { display: flex; flex-direction: column; color: #fff; overflow: hidden; white-space: nowrap; }
.sidebar .steel { align-items: flex-start; padding-left: 6px; font-size: 5px; height: 21px; margin-top: 4px; border-radius: 3px 0 0 3px; }
.sidebar .steel svg { width: 16px; height: 10px; }
.sidebar .steel + .steel { padding-left: 2px; margin-top: 6px; }
.sidebar ul { background: #e4e4e7; color: #222; margin-top: 5px; padding: 4px 0 0 3px; font-size: 4px; line-height: 12px; height: 120px; border-radius: 3px 0 0 0; }
.sidebar ul b { font-size: 6px; padding-left: 4px; font-weight: 600; }

.caller .frame { grid-template-columns: 12fr 217fr 41fr; }
.caller .who-cut { font-size: 7px; line-height: 12px; padding-top: 5px; overflow: hidden; white-space: nowrap; }
.caller .mid { margin-left: -12px; }
.caller .calls { margin: 2px 9px 0 34px; }
.caller .call { height: 31px; padding: 0 3px 0 3px; margin: 0 2px 0 1px; }
.caller .call p { font-size: 9px; line-height: 13px; }
.caller .call small { font-size: 7px; }
.caller .call svg { width: 27px; height: 27px; }
.caller .call svg + svg { margin-left: 7px; }
.caller .address { height: 32px; padding: 0 4px 0 5px; }
.caller .address p { font-size: 6px; line-height: 7px; }
.caller .address button { width: 38px; height: 14px; font-size: 6px; line-height: 10px; margin-right: 10px; }
.caller .address svg { width: 21px; height: 21px; }
.caller .peek { grid-template-columns: repeat(3, 70fr); gap: 7px 4px; margin: 12px 12px 0 0; }
.caller .peek .tile { height: 55px; font-size: 8px; border-radius: 3px; }
.caller .sidebar .steel { height: 32px; margin-top: 2px; padding-left: 10px; font-size: 8px; }
.caller .sidebar .steel svg { width: 26px; height: 15px; }
.caller .sidebar .steel + .steel { height: 30px; margin-top: 10px; padding-left: 2px; font-size: 7px; border-right: 12px solid #ececee; }
.caller .sidebar ul { margin-top: 8px; font-size: 6px; line-height: 18px; padding: 5px 0 0 5px; }
.caller .sidebar ul b { font-size: 9px; padding-left: 8px; }

.dots { width: 100%; height: auto; }

.trust { width: 430px; max-width: 100%; background: #b2b2b2; color: #fff; display: flex; gap: 14px; padding: 3px 11px 6px 14px; font-family: "Open Sans", "Noto Sans", sans-serif; }
.rate { flex: 1; padding-top: 4px; white-space: nowrap; }
.rate span { display: block; font-size: 23px; line-height: 26px; font-weight: 600; }
.rate strong { display: block; font-size: 36px; line-height: 30px; font-weight: 600; }
.pilot-name { display: flex; gap: 7px; padding-left: 13px; height: 32px; font: 27px/32px "Liberation Sans", sans-serif; }
.pilot-name svg { width: 30px; height: 28px; color: #12b279; }
.stars { display: flex; gap: 4px; }
.stars i { width: 35px; height: 34px; border-radius: 5px; background: #71b043; display: grid; place-items: center; }
.stars i.off { background: #c6c6c9; }
.stars svg { width: 24px; height: 23px; }
```

FILE: app.js
```js
const icon = (id) => `<svg aria-hidden="true"><use href="#${id}"/></svg>`;

const products = [
  ['Fries Reg', '1.76', 'navy'], ['Fries Leg', '1.76', 'lime'], ['Steak Chips\nReg', '1.76', 'lime'], ['Fries Reg', '1.76', 'navy'], ['Cheesy Chips', '2.50', 'lime'],
  ['Naan Bread', '1.20', ''], ['Garlic Naan', '1.95', ''], ['Rice', '1.95', ''], ['Mash Potato', '2.50', ''], ['Mix Vegetable', '2.50', ''],
  ['Coleslaw Reg', '1.50', ''], ['Coleslaw Lrg', '1.95', ''], ['Beans Reg', '1.50', ''], ['Beans Lrg', '1.95', ''], ['Corn on\nthe Cob', '', 'dark solo'],
  ['Cheesy Chips\nWth Meal', '1.50', 'rose'], ['Mix Vegetable\nwith Meal', '0.60', 'rose'], ['Full Peri\nPeri Chicken', '8.95', 'dark'], ['Mash Potato\nwith Meal', '0.60', 'dark'], ['Rice with Meal', '', 'dark solo'],
];
const categories = ['Asian Food', 'Burgers new', 'Grill', 'chinese', 'Pizza', 'food', 'Italian', 'Appetizer', 'Extras', 'Dessert'];

const tile = ([name, price, tone]) =>
  `<button class="tile ${tone}"><b>${name}</b>${price ? `<span>£ ${price}</span>` : ''}</button>`;
const tiles = (list, cls) => `<div class="${cls}">${list.map(tile).join('')}</div>`;
const cats = (active) => `<div class="cats">${categories.map((c) => `<button class="cat${c === active ? ' on' : ''}">${c}</button>`).join('')}</div>`;

const calls = (name) => `<div class="calls">
  <div class="call"><p><small>Incoming Call</small>${name}</p>${icon('hangup')}${icon('answer')}</div>
  <div class="address"><p>6 foundry court Slough<br>P.Code: sl1 6hn<br>Contact number: 03344246521</p><button>Last Order</button>${icon('addcall')}</div>
</div>`;

const who = `<div class="who">
  <button class="icon-btn" aria-label="Power">${icon('power')}</button>
  <button class="icon-btn blue" aria-label="Settings">${icon('gear')}</button>
  <div class="online">${icon('user')}ONLINE</div>
  <p class="name">john2<small>(Admin)</small></p>
</div>`;

const status = `<div class="till-status"><span>iPad</span><span>3:05 PM</span><span>34% ■</span></div>`;

const item = (name, qty, price) => `<div class="row"><span>${name}</span><b>${qty}</b>
  <span class="stepper"><button>-</button><button>+</button></span><b>${price}</b></div>`;
const extra = (name, price) => `<div class="row mod"><span>${name}</span><b>${price}</b><button aria-label="Remove">${icon('trash')}</button></div>`;

const orderPanel = `<div class="right">
  <div class="trio"><button class="steel">${icon('group')}Customer</button><button class="steel">${icon('table')}Table</button><button class="steel">${icon('calendar')}Reservations</button></div>
  <div class="order"><button class="steel">${icon('sync')}CLEAR</button><div class="number"><span>Order# <b>57</b></span><small>Lee</small></div><button class="steel">${icon('save')}SAVE</button></div>
  <div class="list">${icon('chat')}
    <h4>Appetizer</h4>${item('4 Pcs Grilled Wings', 2, '3.10')}${extra('-- Discount', '-1.55')}${extra('--&gt; spicy', '')}
    <h4>Main Course</h4>${item('Cheesy Chips Wth Meal', 1, '1.50')}
    <h4>Drinks</h4>${item('Pepsi', 1, '13.71')}
    <h4>Dessert</h4>${item('Chocolate Fudge Cake', 1, '0.0')}
    <div class="tools"><button>${icon('notes')}NOTES</button><button>${icon('discount')}DISCOUNT</button><button>${icon('quantity')}QUANTITY</button></div>
  </div>
  <div class="total"><button class="kitchen">${icon('chef')}KITCHEN</button><div class="sum"><em>[5]</em><p><small>Service Charges: 3.97</small>23.83</p></div><button class="steel" aria-label="Open till">${icon('register')}</button></div>
  <div class="actions"><button class="steel">${icon('docgear')}Manage<br>Orders</button><button class="steel">${icon('docsend')}Send Order</button><button class="steel pay">${icon('pound')}Payment</button></div>
</div>`;

const till = `${status}<div class="left">
  <div class="top"><div>${who}<button class="back">${icon('back')}Back</button></div>${calls('George Anderson')}</div>
  ${tiles(products, 'tiles')}${cats('Extras')}
</div>${orderPanel}`;

const fill = (id, html) => { document.getElementById(id).innerHTML = html; };

fill('pos-large', till);
fill('pos-medium', till);
fill('pos-small', `${status}<div class="left">${who}
  <div class="options">
    <header>Lamb Curry £ 6.50 <button>Close</button></header>
    <p class="crumb">☰ Spicy Extra Spicy</p><div class="heads"><span>Selection<br>(Single)</span><span>Min<br>1</span><span>Max<br>1</span><span>Free<br>-</span></div>
    <ul class="picks"><li>Extra Spicy <span>£ 0.00</span></li><li>Spicy <span>£ 0.00</span></li></ul>
    <ul class="extras"><li><span>7Up</span>£ 0.00</li><li><span>Coke</span>£ 0.00</li><li><span>Diet Pepsi</span>£ 0.00</li></ul>
    <button class="skip">Skip</button><p class="price">£ 6.50</p>
  </div>${cats('Asian Food')}</div>${orderPanel}`);

const reports = ['Daily Sales', 'Weekly Sales', 'Monthly Sales', 'X-Report', 'Z-Report', 'Top Selling Products', 'Kitchen Performance', 'Payment Sense Reports', 'Stock Level Report'];
const stock = ['CHEESY CHIPS', 'NAAN BREAD', 'GARLIC NAAN', 'RICE', 'MASH POTATO', 'MIX VEGETABLE', 'COLESLAW REG', 'COLESLAW LRG', 'BEANS REG', 'BEANS LRG'];
fill('stock', `<span class="stock-logo">JeM</span><span class="help">◎ Need help?</span>
<div class="stock-body">
  <nav class="stock-nav">${reports.map((r) => `<button>${r}</button>`).join('')}</nav>
  <div>
    <div class="stats"><div>Total Products<b>235</b></div><div>Below Reorder Level<b>0</b></div><div>Out of Stock<b>174</b></div><div class="filter"><i></i><i></i><button>Filter Stock By ▾</button></div></div>
    <table class="stock-table"><thead><tr><th>Product Name ⇅</th><th>Reorder Level ⇅</th><th>Available Stock ⇅</th></tr></thead>
    <tbody>${stock.map((s) => `<tr><td>${s}</td><td>0</td><td>0</td></tr>`).join('')}</tbody></table>
  </div>
  <div class="stock-foot">Total Products: 235/235</div>
</div>`);

const when = `<p>${icon('calendar')}10 Sep</p><p>${icon('clock')}20:48</p>`;
const wait = (t) => `<p>${icon('clock')}${t} min</p>`;
const seats = [
  [1, 'Busy', 2, wait(131)], [2, 'Reserved', 2, when], [3, 'Busy', 2, wait(2)], [4, 'Free', 2, ''],
  [8, 'Reserved', 6, when], [9, 'Free', 6, ''], [10, 'Reserved', 6, when], [11, 'Busy', 6, wait(2)],
];
fill('tables', `<div class="tables-bar"><button>${icon('sync')}Sync</button><i></i></div>
<div class="seats">${seats.map(([n, s, c, t]) => `<div class="seat ${s.toLowerCase()}"><b>${n}</b>${icon('people')}${t}<footer><span>${s}</span><span>${c}</span></footer></div>`).join('')}</div>`);

const charges = [['ra Charges:', '108.00'], ['vice Charges:', '53.38'], ['very Charges:', '0.00'], ['ine Charges:', '14.83'], ['Amount:', '6114.06'], ['counts Amount:', '526.63'], ['chers Amount:', '2002.40'], ['unds', '61.73'], ['T:', '92385.02']];
const legend = [['#1c9a2d', 'Net Sales'], ['#109ade', 'VAT Amount'], ['#a6d94c', 'Total Discount'], ['#c8101c', 'Total Charges'], ['#111', 'Tip Amount'], ['#777', 'Refunded Amount']];
fill('report', `<h3>Report [09/10/2018 19:52:07]</h3>
<div class="gross"><span>oss Sales:</span><span>698761.62</span><small>Cash:
Card:
Online:</small><small>624067.62
64854.14
9839.88</small></div>
<div class="split"><table>${charges.map(([a, b]) => `<tr><td>${a}</td><td>${b}</td></tr>`).join('')}</table>
<svg viewBox="0 0 104 104"><circle cx="52" cy="52" r="51" fill="#4fba78"/><path d="M52 52V1A51 51 0 0 0 12 20z" fill="#5573bd"/><path d="M52 52V1h-4z" fill="#222"/><circle cx="52" cy="52" r="17" fill="#fff"/><text x="31" y="24" font-size="5" fill="#fff">13%</text><text x="46" y="20" font-size="4" fill="#fff">0%</text><text x="62" y="85" font-size="5" fill="#fff">86%</text></svg>
<ul class="legend">${legend.map(([c, t]) => `<li><i style="--c:${c}"></i>${t}</li>`).join('')}</ul></div>`);

const swatches = ['#7cbf12', '#0a94d8', '#c810a0', '#f28f10', '#ee1c34', '#0a9fe0', '#ba737c', '#7d7d7d', '#000', '#fff'];
fill('edit', `<div><div class="modify"><header>Modify Product <span>⊗</span></header>
<form><div><label>Name<input type="text" value="Fries Reg"></label><label>Price<input type="text" value="1.65"></label>
<div class="pair"><label>Delivery Price<input type="text" value="1.76"></label><label>Online Price<input type="text" value="1.87"></label></div></div>
<div><span>Color</span><div class="swatches">${swatches.map((c, i) => `<input type="radio" name="color" aria-label="Color ${i + 1}" style="--c:${c}"${i === 1 ? ' checked' : ''}>`).join('')}</div><button type="button">UPDATE</button></div></form></div>
${tiles(products.slice(10, 15), 'peek')}</div>
<div class="sidebar"><button class="steel">${icon('group')}Customer</button><button class="steel">${icon('sync')}CLEAR</button>
<ul><li><b>Appetizer</b></li><li>4 Pcs Grilled</li><li>-- Discount</li><li>--&gt; spicy</li><li><b>Main</b></li><li>Cheesy Chips</li><li><b>Drinks</b></li><li>Pepsi</li><li><b>Dessert</b></li></ul></div>`);

fill('caller', `<div class="who-cut">n2<br>min)</div><div class="mid">${calls('Steve Anderson')}
${tiles([products[2], products[3], products[4], products[7], products[8], products[9]], 'peek')}</div>
<div class="sidebar"><button class="steel">${icon('group')}Customer</button><button class="steel">${icon('sync')}CLEAR</button>
<ul><li><b>Appetizer</b></li><li>Buffalos Wings</li><li>*Chicken</li><li>-- Discount</li><li>--&gt; spicy</li></ul></div>`);
```
